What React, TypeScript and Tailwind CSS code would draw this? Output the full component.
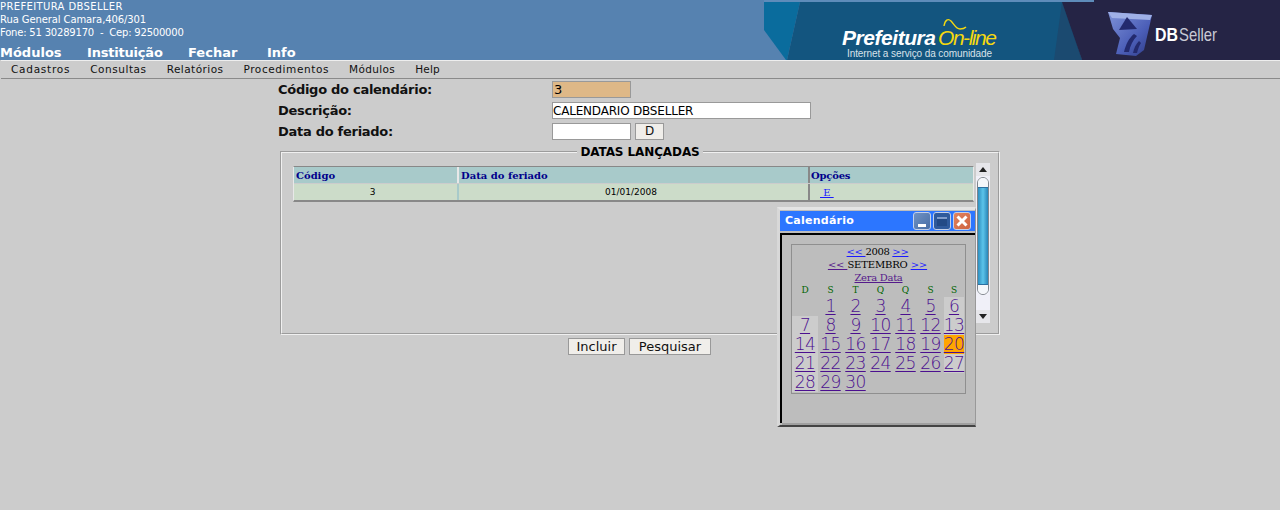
const sans = "font-['DejaVu_Sans',sans-serif]";
const serif = "font-['DejaVu_Serif',serif]";

const days = [
  ["", "1", "2", "3", "4", "5", "6"],
  ["7", "8", "9", "10", "11", "12", "13"],
  ["14", "15", "16", "17", "18", "19", "20"],
  ["21", "22", "23", "24", "25", "26", "27"],
  ["28", "29", "30", "", "", "", ""],
];

const menu = [
  { label: "Cadastros", cls: "tracking-[0.75px]" },
  { label: "Consultas", cls: "tracking-[0.55px]" },
  { label: "Relatórios", cls: "tracking-[0.45px]" },
  { label: "Procedimentos", cls: "tracking-[0.6px]" },
  { label: "Módulos", cls: "tracking-[0.35px]" },
  { label: "Help", cls: "tracking-[0.2px]" },
];
const topLinks = [
  { label: "Módulos", cls: "w-[87px]" },
  { label: "Instituição", cls: "w-[101px] tracking-[-0.2px]" },
  { label: "Fechar", cls: "w-[79px]" },
  { label: "Info", cls: "" },
];

const Banner = () => (
  <svg width="516" height="60" viewBox="0 0 516 60" className="block shrink-0">
    <defs>
      <linearGradient id="cube" x1="0" y1="0" x2="1" y2="1">
        <stop offset="0" stopColor="#7f93d8" />
        <stop offset="0.6" stopColor="#4c5fb8" />
        <stop offset="1" stopColor="#2d3a86" />
      </linearGradient>
    </defs>
    <rect x="0" y="0" width="330" height="2" fill="#5e8cba" />
    <rect x="330" y="0" width="186" height="2" fill="#252445" />
    <polygon points="0,2 36,2 23,60 22,60 0,30" fill="#0a6c9d" />
    <polygon points="36,2 300,2 318,60 23,60" fill="#13557f" />
    <polygon points="298,2 290,60 318,60" fill="#1b4a70" />
    <polygon points="298,2 516,2 516,60 318,60" fill="#252445" />
    <text x="78" y="45" fill="#fff" fontFamily="'Liberation Sans',sans-serif" fontWeight="700" fontStyle="italic" fontSize="21" textLength="94">Prefeitura</text>
    <text x="174" y="45" fill="#f5d90f" fontFamily="'Liberation Sans',sans-serif" fontStyle="italic" fontSize="21" textLength="59">On-line</text>
    <path d="M180 26c1-6 4-8 7-5s5 8 9 8 5-1 6-2" fill="none" stroke="#f5d90f" strokeWidth="1.4" />
    <text x="83" y="57" fill="#d8e2ea" fontFamily="'Liberation Sans',sans-serif" fontSize="10" textLength="145">Internet a serviço da comunidade</text>
    <polygon points="344,12 388,15 380,50 372,56 352,54 356,38 349,29" fill="url(#cube)" />
    <polygon points="344,12 388,15 386,20 348,18" fill="#9fb0e6" />
    <polygon points="363,17 373,29 355,30" fill="#232a6e" />
    <path d="M360 52c2-8 5-14 10-18l3 2c-4 4-7 10-8 16z" fill="#232a6e" />
    <path d="M369 53c1-5 3-9 6-12l2 2c-2 3-3 6-4 10z" fill="#232a6e" />
    <text x="391" y="41" fill="#fff" fontFamily="'Liberation Sans',sans-serif" fontWeight="700" fontSize="19" textLength="23" lengthAdjust="spacingAndGlyphs">DB</text>
    <text x="415" y="41" fill="#c9cbd6" fontFamily="'Liberation Sans',sans-serif" fontSize="19" textLength="38" lengthAdjust="spacingAndGlyphs">Seller</text>
  </svg>
);

const Scrollbar = () => (
  <div className="w-[14px] h-[160px] flex flex-col bg-[#f0f0f8] shrink-0 mt-[-3px]">
    <div className="h-[13px] flex items-center justify-center bg-[#e6e6ea]">
      <div className="w-0 h-0 border-x-[4px] border-x-transparent border-b-[5px] border-b-[#222]" />
    </div>
    <div className="h-[118px] mt-px mx-px rounded-[6px] border border-[#7f858c] flex flex-col overflow-hidden bg-white">
      <div className="h-[9px] bg-[#f4f6fa]" />
      <div className="flex-1 bg-gradient-to-r from-[#2f8fc0] via-[#5cc4ea] to-[#2a86b8] border-y border-[#2c6fa0]" />
      <div className="h-[9px] bg-[#f4f6fa]" />
    </div>
    <div className="flex-1" />
    <div className="h-[13px] flex items-center justify-center bg-[#e6e6ea]">
      <div className="w-0 h-0 border-x-[4px] border-x-transparent border-t-[5px] border-t-[#222]" />
    </div>
  </div>
);

const WinButton = ({ className, children }: any) => (
  <div className={"w-[18px] h-[18px] rounded-[3px] border border-[#c4d0e8] flex items-center justify-center relative " + className}>
    {children}
  </div>
);

const Calendar = () => (
  <div className="absolute left-[777px] top-[207px] w-[199px] h-[220px] bg-[#bdbdbd] border-t-[3px] border-l-[3px] border-t-[#e4e4e4] border-l-[#d8d8d8] border-b-[2px] border-b-[#444] border-r-[1px] border-r-[#999] flex flex-col">
    <div className="h-[20px] mt-[1px] mb-[2px] bg-[#2c76ff] flex items-center justify-between pl-[5px] pr-[4px] shrink-0">
      <span className={"text-[11px] font-bold text-white tracking-[0.25px] pt-px " + sans}>Calendário</span>
      <div className="flex gap-[2px]">
        <WinButton className="bg-gradient-to-br from-[#6f92c4] to-[#4a6fa6]">
          <div className="absolute bottom-[2px] left-[4px] w-[8px] h-[3px] bg-white" />
        </WinButton>
        <WinButton className="bg-[#2f5a9c]">
          <div className="w-[10px] h-[9px] bg-[#234a86] border-t-[2px] border-[#7f9ccc]" />
        </WinButton>
        <WinButton className="bg-gradient-to-br from-[#e0835f] to-[#cf6340]">
          <svg width="12" height="12" viewBox="0 0 12 12">
            <path d="M1.5 1.5l9 9M10.5 1.5l-9 9" stroke="#fff" strokeWidth="3" />
          </svg>
        </WinButton>
      </div>
    </div>
    <div className="flex-1 border-t-[2px] border-l-[2px] border-black pt-[9px] pl-[9px]">
      <div className={"w-[175px] h-[150px] border border-[#8f8f8f] text-center " + serif}>
        <div className="h-[13px] text-[10px] leading-[13px] text-black tracking-[-0.35px] pr-[2px]">
          <a className="underline text-[#1a1aff] whitespace-pre">&lt;&lt; </a>2008 <a className="underline text-[#1a1aff]">&gt;&gt;</a>
        </div>
        <div className="h-[13px] text-[10px] leading-[13px] text-black tracking-[-0.15px] pr-[2px]">
          <a className="underline text-[#551a8b] whitespace-pre">&lt;&lt; </a>SETEMBRO <a className="underline text-[#1a1aff]">&gt;&gt;</a>
        </div>
        <div className="h-[13px] text-[10px] leading-[13px] tracking-[-0.3px]">
          <a className="underline text-[#551a8b]">Zera Data</a>
        </div>
        <div className="grid grid-cols-[26px_25px_25px_25px_25px_25px_22px] h-[13px] text-[9px] leading-[13px] text-[#006400]">
          {["D", "S", "T", "Q", "Q", "S", "S"].map((d, i) => (
            <span key={i}>{d}</span>
          ))}
        </div>
        <div className="grid grid-cols-[26px_25px_25px_25px_25px_25px_22px] auto-rows-[19px]">
          {days.flat().map((d, i) => {
            const today = d === "20";
            const right = i % 7 === 6 && i < 28;
            const left = i % 7 === 0 && d !== "";
            return (
              <div key={i} className={"flex justify-center " + sans + " " + (today ? "bg-[#ffa500] mx-px" : right ? "bg-[#cccccc] mx-px" : left ? "bg-[#cccccc]" : "")}>
                <a className="underline decoration-1 underline-offset-[2px] text-[#4b0f8f] text-[17px] leading-[19px] font-extralight tracking-[-0.6px]">{d}</a>
              </div>
            );
          })}
        </div>
      </div>
    </div>
    <div className="h-[2px] bg-[#a0a0a0] ml-[2px] shrink-0" />
  </div>
);

export default function App() {
  return (
    <div className={"relative w-[1280px] h-[510px] overflow-hidden bg-[#cccccc] " + sans}>
      {/* topo */}
      <div className="h-[60px] flex justify-between bg-[#5682b0]">
        <div className="text-white">
          <div className="text-[10px] leading-[13px] tracking-[0.37px]">PREFEITURA DBSELLER</div>
          <div className="text-[10px] leading-[13px] tracking-[-0.1px]">Rua General Camara,406/301</div>
          <div className="text-[10px] leading-[13px] whitespace-pre tracking-[-0.2px]">Fone: 51 30289170  -  Cep: 92500000</div>
          <div className="flex mt-[5px] text-[13px] font-bold leading-[17px]">
            {topLinks.map((l) => (
              <span key={l.label} className={l.cls}>{l.label}</span>
            ))}
          </div>
        </div>
        <Banner />
      </div>

      {/* menu */}
      <div className="h-[19px] flex items-center gap-[20px] pl-[10px] ml-[1px] border-t border-t-[#eeeeee] border-b border-b-[#8a8a8a] text-[10.5px] text-[#111]">
        {menu.map((m) => (
          <span key={m.label} className={m.cls}>{m.label}</span>
        ))}
      </div>

      {/* form */}
      <div className="ml-[278px] w-[722px]">
        <div className="h-[21px] flex items-center">
          <label className="w-[274px] text-[13px] font-bold text-[#111] tracking-[-0.28px]">Código do calendário:</label>
          <div className="w-[79px] h-[17px] bg-[#deb887] border border-[#999] text-[13px] leading-[16px] pl-px text-black">3</div>
        </div>
        <div className="h-[21px] flex items-center">
          <label className="w-[274px] text-[13px] font-bold text-[#111] tracking-[-0.28px]">Descrição:</label>
          <div className="w-[259px] h-[17px] bg-white border border-[#999] text-[12px] leading-[16px] text-black tracking-[-0.2px]">CALENDARIO DBSELLER</div>
        </div>
        <div className="h-[21px] flex items-center">
          <label className="w-[274px] text-[13px] font-bold text-[#111] tracking-[-0.28px]">Data do feriado:</label>
          <div className="w-[79px] h-[17px] bg-white border border-[#999]" />
          <button className="ml-[4px] w-[29px] h-[17px] bg-[#f0eeea] border border-[#999] text-[12px] leading-[15px] text-[#111]">D</button>
        </div>

        {/* fieldset */}
        <fieldset className="ml-[2px] mt-[3px] w-[720px] min-w-0 h-[190px] border-2 [border-style:groove] border-[#f0f0f0] px-[11px] pt-0">
          <legend className="mx-auto px-[3px] text-[12px] font-bold leading-[14px] text-black tracking-[-0.1px]">DATAS LANÇADAS</legend>
          <div className="flex gap-[2px] mt-[7px]">
            <div className="w-[681px] h-[36px] shrink-0 border border-[#e8e8e8] border-t-[#888] border-b-2 border-b-[#888] text-[#00008b]">
              <div className={"h-[16px] flex bg-[#a8caca] text-[10px] font-bold leading-[17px] " + serif}>
                <div className="w-[165px] pl-[2px] border-r-2 border-[#e8e8e8]">Código</div>
                <div className="w-[351px] pl-[2px] border-r-2 border-[#888]">Data do feriado</div>
                <div className="flex-1 pl-px tracking-[-0.2px]">Opções</div>
              </div>
              <div className="h-[16px] mt-px flex bg-[#ccdcc9] text-[9px] leading-[17px] text-black text-center">
                <div className="w-[165px] border-r-2 border-[#a8caca] pr-[6px]">3</div>
                <div className="w-[351px] border-r-2 border-[#888] pr-[5px]">01/01/2008</div>
                <div className="flex-1 text-left pl-[10px]">
                  <a className={"underline text-[#1a1aff] text-[10px] whitespace-pre " + serif}> E </a>
                </div>
              </div>
            </div>
            <Scrollbar />
          </div>
        </fieldset>

        <div className="flex justify-center gap-[4px] mt-[3px] ml-[1px]">
          <button className="w-[57px] h-[17px] bg-[#f0eeea] border border-[#999] text-[13px] leading-[15px] text-[#111]">Incluir</button>
          <button className="w-[82px] h-[17px] bg-[#f0eeea] border border-[#999] text-[13px] leading-[15px] text-[#111]">Pesquisar</button>
        </div>
      </div>

      <Calendar />
    </div>
  );
}
